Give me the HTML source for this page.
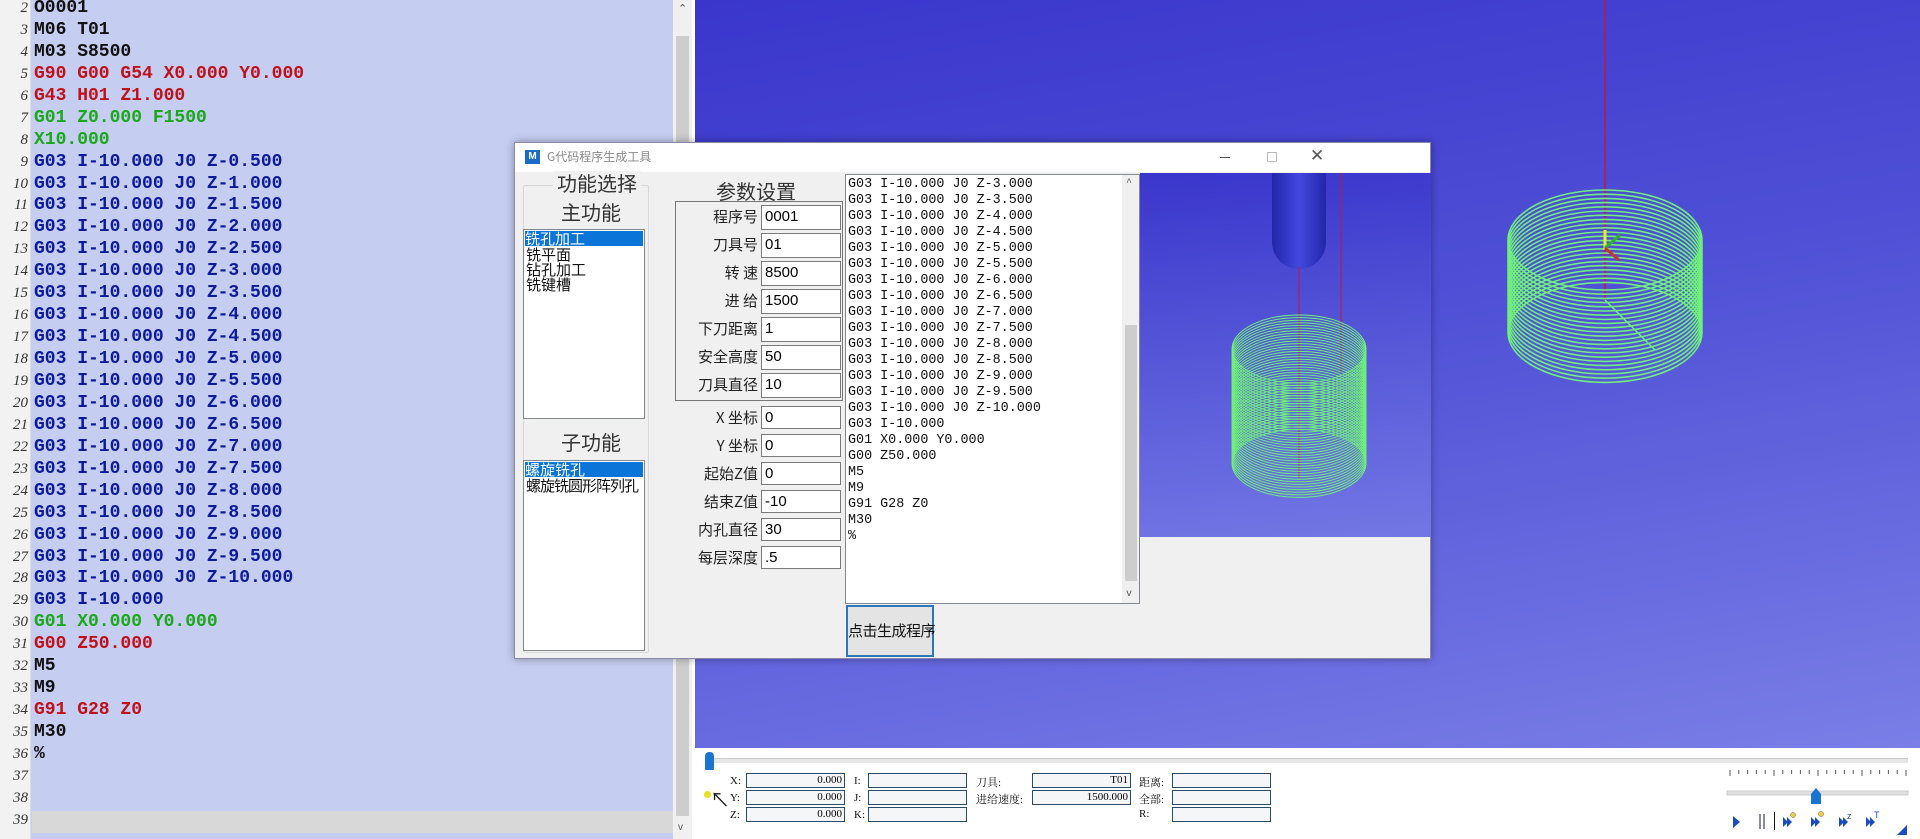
<!DOCTYPE html>
<html><head><meta charset="utf-8"><style>
*{margin:0;padding:0;box-sizing:border-box}
body{width:1920px;height:839px;overflow:hidden;background:#fff;position:relative;font-family:"Liberation Sans","Noto Sans CJK SC",sans-serif}
.abs{position:absolute}
#ed{left:0;top:0;width:673px;height:839px;background:#c5cdf0}
#gut{left:0;top:0;width:31px;height:839px;background:#f2f2f2;border-right:1px solid #ddd}
.ln{position:absolute;left:0;width:28px;text-align:right;font:italic 15px "Liberation Serif",serif;color:#333}
.cl{position:absolute;left:34px;font:bold 18px "Liberation Mono",monospace;white-space:pre}
.k{color:#111}.r{color:#c0101a}.g{color:#1aa81a}.b{color:#0c1a9c}
#vs{left:673px;top:0;width:19px;height:839px;background:#f0f0f0}
#view{left:695px;top:0;width:1225px;height:748px;background:linear-gradient(170deg,#3a36cc 0%,#4f50d6 45%,#7a7ee6 100%)}
#bot{left:695px;top:748px;width:1225px;height:91px;background:#fff}
.fld{position:absolute;height:15px;border:1px solid #2a4a6a;background:#f4f6f8;font:11px "Liberation Serif",serif;text-align:right;padding-right:2px;line-height:13px}
.lb{position:absolute;font:11px "Liberation Serif","Noto Serif CJK SC",serif;color:#111}
#dlg{left:514px;top:142px;width:917px;height:517px;background:#f0f0f0;border:1px solid #8a8aa8;box-shadow:0 0 8px rgba(0,0,0,.35)}
#tb{left:0;top:0;width:915px;height:29px;background:#fff}
.cn{font-family:"Noto Sans CJK SC","WenQuanYi Zen Hei",sans-serif}
.inp{position:absolute;left:246px;width:80px;height:24px;background:#fff;border:1px solid #7a7a7a;font:15px "Liberation Sans",sans-serif;padding:2px 3px;line-height:18px}
.pl{position:absolute;right:675px;font-size:16px;color:#222;text-align:right;width:100px;white-space:nowrap}
#ta{left:330px;top:31px;width:295px;height:430px;background:#fff;border:1px solid #828790;font:13.4px "Liberation Mono",monospace;line-height:16px;white-space:pre;padding:2px 0 0 2px;color:#111}
</style></head><body>
<div id="ed" class="abs"></div>
<div id="gut" class="abs"></div>
<div class="abs" style="left:32px;top:811px;width:641px;height:22px;background:#d8d8d8"></div>
<div id="lines"></div>
<div id="vs" class="abs"><div class="abs" style="left:5px;top:2px;font-size:11px;color:#555">&#8963;</div><div class="abs" style="left:3px;top:36px;width:13px;height:780px;background:#cdcdcd"></div><div class="abs" style="left:5px;top:822px;font-size:10px;color:#555">v</div></div>
<div id="view" class="abs">
<svg width="1225" height="748" style="position:absolute;left:0;top:0">
<line x1="910" y1="0" x2="910" y2="300" stroke="#c8143c" stroke-width="1.5"/>
<g id="cyl1" fill="none" stroke="#6ff07a" stroke-width="1.6"></g>
<line x1="910" y1="300" x2="960" y2="350" stroke="#6ff07a" stroke-width="1.5"/>
<line x1="910" y1="230" x2="910" y2="250" stroke="#e8e840" stroke-width="3"/>
<line x1="910" y1="248" x2="925" y2="235" stroke="#30b030" stroke-width="3"/>
<line x1="910" y1="248" x2="924" y2="260" stroke="#d03030" stroke-width="3"/>
</svg>
</div>
<div id="bot" class="abs">
<div class="abs" style="left:10px;top:10px;width:1203px;height:5px;background:#e6e6e6;border-top:1px solid #ccc"></div>
<div class="abs" style="left:10px;top:4px;width:9px;height:18px;background:#1a74d0;border-radius:4px 4px 1px 1px"></div>
<div class="lb" style="left:35px;top:27px">X:</div><div class="fld" style="left:51px;top:25px;width:99px">0.000</div>
<div class="lb" style="left:35px;top:44px">Y:</div><div class="fld" style="left:51px;top:42px;width:99px">0.000</div>
<div class="lb" style="left:35px;top:61px">Z:</div><div class="fld" style="left:51px;top:59px;width:99px">0.000</div>
<div class="lb" style="left:159px;top:27px">I:</div><div class="fld" style="left:173px;top:25px;width:99px"></div>
<div class="lb" style="left:159px;top:44px">J:</div><div class="fld" style="left:173px;top:42px;width:99px"></div>
<div class="lb" style="left:159px;top:61px">K:</div><div class="fld" style="left:173px;top:59px;width:99px"></div>
<div class="lb" style="left:281px;top:26px">刀具:</div><div class="fld" style="left:337px;top:25px;width:99px">T01</div>
<div class="lb" style="left:281px;top:43px">进给速度:</div><div class="fld" style="left:337px;top:42px;width:99px">1500.000</div>
<div class="lb" style="left:444px;top:26px">距离:</div><div class="fld" style="left:477px;top:25px;width:99px"></div>
<div class="lb" style="left:444px;top:43px">全部:</div><div class="fld" style="left:477px;top:42px;width:99px"></div>
<div class="lb" style="left:444px;top:60px">R:</div><div class="fld" style="left:477px;top:59px;width:99px"></div>
<div class="abs" style="left:9px;top:43px;width:7px;height:7px;background:#e8e020;border-radius:50%"></div>
<div class="abs" style="left:15px;top:43px;font-size:20px;color:#222;line-height:20px">&#8598;</div>
<svg class="abs" style="left:1030px;top:20px" width="195" height="71">
<g id="ticks" stroke="#555"></g>
<rect x="2" y="23" width="181" height="4" fill="#e0e0e0" stroke="#ccc"/>
<path d="M86 26 l5 -6 l5 6 v10 h-10z" fill="#1a74d0"/>
<path d="M8 48 l7 6 l-7 6z" fill="#1a4cc0"/>
<rect x="34" y="46" width="2" height="15" fill="#8a8aa8"/><rect x="38" y="46" width="2" height="15" fill="#8a8aa8"/>
<rect x="49" y="44" width="1" height="18" fill="#111"/>
<g fill="#1a4cc0"><path d="M58 49 l5 5 l-5 5z M62 49 l5 5 l-5 5z"/><path d="M86 49 l5 5 l-5 5z M90 49 l5 5 l-5 5z"/><path d="M114 49 l5 5 l-5 5z M118 49 l5 5 l-5 5z"/><path d="M141 49 l5 5 l-5 5z M145 49 l5 5 l-5 5z"/></g>
<circle cx="68" cy="47" r="2.5" fill="#f0d040" stroke="#555" stroke-width=".5"/>
<circle cx="96" cy="46" r="2.5" fill="#f0d040" stroke="#555" stroke-width=".5"/>
<text x="122" y="51" font-size="9" fill="#1a4cc0" font-family="Liberation Sans">z</text>
<text x="149" y="50" font-size="9" fill="#1a4cc0" font-family="Liberation Sans">T</text>
<path d="M172 67 l10 -10 v10z" fill="#1a4cc0"/>
</svg>
</div>

<div id="dlg" class="abs">
<div id="tb" class="abs">
<div class="abs" style="left:10px;top:7px;width:15px;height:14px;background:#1a6cc8;color:#fff;font:bold 10px 'Liberation Sans';text-align:center;line-height:14px">M</div>
<div class="abs cn" style="left:32px;top:5px;font-size:12px;color:#888">G代码程序生成工具</div>
<div class="abs" style="left:705px;top:14px;width:10px;height:1px;background:#555"></div>
<div class="abs" style="left:752px;top:9px;width:10px;height:10px;border:1px solid #bbb"></div>
<div class="abs" style="left:795px;top:3px;font-size:17px;color:#555">✕</div>
</div>
<div class="abs" style="left:8px;top:42px;width:126px;height:468px;border:1px solid #d8d8d8;border-radius:2px"></div>
<div class="abs cn" style="left:38px;top:28px;font-size:20px;color:#333;background:#f0f0f0;padding:0 4px;line-height:24px">功能选择</div>
<div class="abs cn" style="left:46px;top:57px;font-size:20px;color:#333;line-height:24px">主功能</div>
<div class="abs cn" style="left:8px;top:86px;width:122px;height:190px;background:#fff;border:1px solid #828790;font-size:15px;line-height:15px;color:#111;white-space:nowrap">
<div style="background:#0a74d8;color:#fff;margin:1px">铣孔加工</div><div style="padding-left:2px">铣平面</div><div style="padding-left:2px">钻孔加工</div><div style="padding-left:2px">铣键槽</div></div>
<div class="abs cn" style="left:46px;top:287px;font-size:20px;color:#333;line-height:24px">子功能</div>
<div class="abs cn" style="left:8px;top:317px;width:122px;height:191px;background:#fff;border:1px solid #828790;font-size:15px;line-height:15px;color:#111;white-space:nowrap;overflow:hidden">
<div style="background:#0a74d8;color:#fff;margin:1px">螺旋铣孔</div><div style="padding-left:2px;letter-spacing:-1px">螺旋铣圆形阵列孔</div></div>
<div class="abs cn" style="left:201px;top:36px;font-size:20px;color:#333;line-height:24px">参数设置</div>
<div class="abs" style="left:160px;top:58px;width:168px;height:200px;border:1px solid #777"></div>
<div id="params"></div>
<div id="ta" class="abs">G03 I-10.000 J0 Z-3.000
G03 I-10.000 J0 Z-3.500
G03 I-10.000 J0 Z-4.000
G03 I-10.000 J0 Z-4.500
G03 I-10.000 J0 Z-5.000
G03 I-10.000 J0 Z-5.500
G03 I-10.000 J0 Z-6.000
G03 I-10.000 J0 Z-6.500
G03 I-10.000 J0 Z-7.000
G03 I-10.000 J0 Z-7.500
G03 I-10.000 J0 Z-8.000
G03 I-10.000 J0 Z-8.500
G03 I-10.000 J0 Z-9.000
G03 I-10.000 J0 Z-9.500
G03 I-10.000 J0 Z-10.000
G03 I-10.000
G01 X0.000 Y0.000
G00 Z50.000
M5
M9
G91 G28 Z0
M30
%<div class="abs" style="left:276px;top:0;width:17px;height:428px;background:#f0f0f0"><div class="abs" style="left:3px;top:150px;width:12px;height:256px;background:#cdcdcd"></div><div class="abs" style="left:4px;top:1px;font-size:10px;color:#555">^</div><div class="abs" style="left:4px;top:412px;font-size:10px;color:#555">v</div></div></div>
<div class="abs" style="left:625px;top:30px;width:291px;height:364px;background:linear-gradient(175deg,#3a36cc 0%,#5658d8 50%,#7377e4 100%);overflow:hidden">
<svg width="291" height="364">
<defs><linearGradient id="tg" x1="0" x2="1"><stop offset="0" stop-color="#2226a8"/><stop offset=".5" stop-color="#4548e0"/><stop offset="1" stop-color="#2226a8"/></linearGradient></defs>
<path d="M132 0 v69 a27 27 0 0 0 54 0 v-69z" fill="url(#tg)"/>
<line x1="159" y1="94" x2="159" y2="305" stroke="#c8143c" stroke-width="1"/>
<line x1="201" y1="0" x2="201" y2="200" stroke="#c8143c" stroke-width="1"/>
<g id="cyl2" fill="none" stroke="#6ff07a" stroke-width="1"></g>
</svg></div>
<div class="abs cn" style="left:331px;top:462px;width:88px;height:52px;border:2px solid #2a78b8;background:#e4e4e4;font-size:15px;line-height:48px;text-align:center;color:#111;white-space:nowrap;letter-spacing:-0.5px">点击生成程序</div>
</div>
<script>
var L=[["O0001","k"],["M06 T01","k"],["M03 S8500","k"],["G90 G00 G54 X0.000 Y0.000","r"],["G43 H01 Z1.000","r"],["G01 Z0.000 F1500","g"],["X10.000","g"]];
for(var z=0.5;z<=10;z+=0.5)L.push(["G03 I-10.000 J0 Z-"+z.toFixed(3),"b"]);
L.push(["G03 I-10.000","b"],["G01 X0.000 Y0.000","g"],["G00 Z50.000","r"],["M5","k"],["M9","k"],["G91 G28 Z0","r"],["M30","k"],["%","k"],["",""],["",""],["",""]);
var h="";for(var i=0;i<L.length;i++){var y=-2+i*21.94;h+='<div class="ln" style="top:'+(y+2)+'px">'+(i+2)+'</div><div class="cl '+L[i][1]+'" style="top:'+y+'px">'+L[i][0]+'</div>';}
document.getElementById("lines").innerHTML=h;
var P=[["程序号","0001"],["刀具号","01"],["转 速","8500"],["进 给","1500"],["下刀距离","1"],["安全高度","50"],["刀具直径","10"],["X 坐标","0"],["Y 坐标","0"],["起始Z值","0"],["结束Z值","-10"],["内孔直径","30"],["每层深度",".5"]];
h="";for(i=0;i<P.length;i++){var t=i<7?62+i*28:263+(i-7)*28;h+='<div class="pl cn" style="left:140px;top:'+(t+1)+'px;width:103px;font-size:15px">'+P[i][0]+'</div><div class="inp" style="top:'+t+'px;height:'+(i<7?25:23)+'px">'+P[i][1]+'</div>';}
document.getElementById("params").innerHTML=h;
var s="";for(i=0;i<=22;i++){var cy=240+i*4.2;s+='<ellipse cx="910" cy="'+cy+'" rx="97" ry="50"/>';}
document.getElementById("cyl1").innerHTML=s;
s="";for(i=0;i<=44;i++){var cy=176+i*2.6;s+='<ellipse cx="159" cy="'+cy+'" rx="67" ry="34"/>';}
document.getElementById("cyl2").innerHTML=s;
s="";for(i=0;i<=20;i++){var x=5+i*8.8;s+='<line x1="'+x+'" y1="2" x2="'+x+'" y2="'+(i%5==0?8:6)+'"/>';}
document.getElementById("ticks").innerHTML=s;
</script>
</body></html>
